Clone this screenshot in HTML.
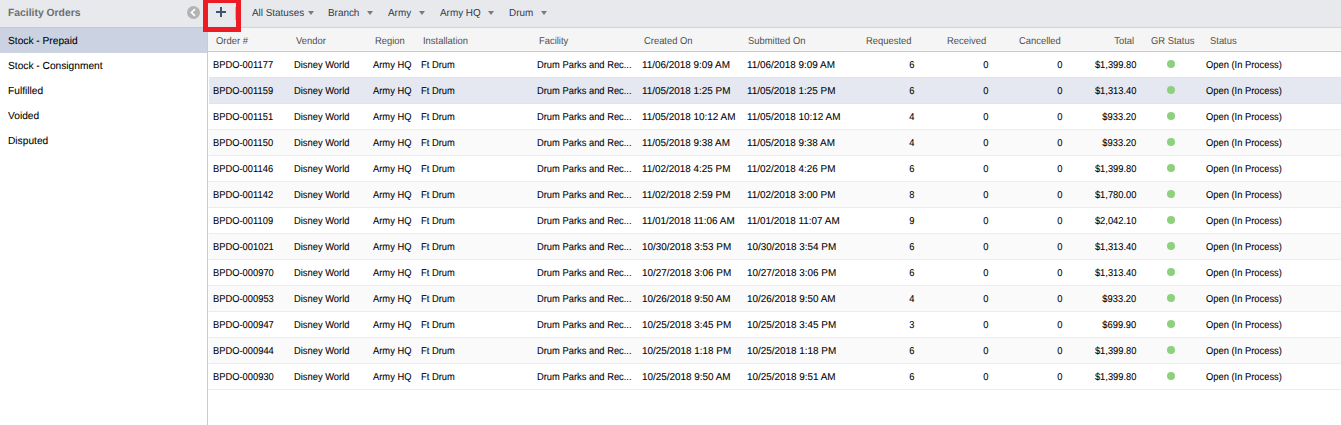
<!DOCTYPE html><html><head><meta charset="utf-8"><style>
*{margin:0;padding:0;box-sizing:border-box}
html,body{width:1341px;height:425px;overflow:hidden;background:#fff;position:relative}
body{font-family:"Liberation Sans",sans-serif;color:#000;text-rendering:geometricPrecision}
.a{position:absolute;white-space:nowrap}
#tb{left:0;top:0;width:1341px;height:27px;background:#e8e9ed;}
#tbl{left:0;top:26px;width:207px;height:1px;background:#eaebee}
#tbl2{left:0;top:27px;width:207px;height:1px;background:#c6c6c6}
#tbr{left:207px;top:26px;width:1134px;height:1px;background:#e7e7eb}
#tbr2{left:207px;top:27px;width:1134px;height:1px;background:#d1d5dd}
#side{left:0;top:28px;width:207px;height:397px;background:#fff}
#sideb{left:207px;top:28px;width:1px;height:397px;background:#c4ccd6}
.title{left:8px;top:7px;font-size:10.5px;font-weight:bold;color:#6e6e6e;letter-spacing:0px;transform-origin:0 0;transform:scaleX(0.985)}
.si{left:8px;font-size:10.2px;color:#000;letter-spacing:0px;transform-origin:0 0;transform:scaleX(1);-webkit-text-stroke:0.08px #000}
#sel{left:0;top:28px;width:207px;height:25px;background:#cbd3e3}
.tbt{font-size:10.2px;color:#2f3b50;top:7.5px;letter-spacing:0px;transform-origin:0 0;transform:scaleX(0.971)}
.arr{width:0;height:0;border-left:3.5px solid transparent;border-right:3.5px solid transparent;border-top:4px solid #7a7a7a;top:11px}
#hdr{left:208px;top:28px;width:1133px;height:23px;background:#f5f5f5}
#hdrb{left:208px;top:51px;width:1133px;height:1px;background:#c8c8c8}
.h{font-size:10px;color:#4f4f4f;top:36px;letter-spacing:0px;transform-origin:0 0;transform:scaleX(0.94)}
.row{left:208px;width:1133px;height:26px}
.sep{left:208px;width:1133px;height:1px;background:#ededed}
.d{font-size:10px;color:#000;letter-spacing:0px;transform-origin:0 0;transform:scale(0.935,1);-webkit-text-stroke:0.08px #000}
.r{text-align:right;transform-origin:100% 0 !important}
.dot{width:8px;height:8px;border-radius:50%;background:#8dd17f}
#red{left:203px;top:-2px;width:38px;height:34px;border:5px solid #ed1c24}
</style></head><body>
<div class="a" id="tb"></div><div class="a" id="tbl"></div><div class="a" id="tbl2"></div><div class="a" id="tbr"></div><div class="a" id="tbr2"></div>
<div class="a" id="side"></div><div class="a" id="sel"></div><div class="a" id="sideb"></div>
<div class="a title">Facility Orders</div>
<svg class="a" style="left:187px;top:6px" width="13" height="13" viewBox="0 0 13 13"><circle cx="6.5" cy="6.5" r="6.5" fill="#b3b3b3"/><path d="M8.0 3.2 L4.5 6.5 L8.0 9.8" stroke="#fff" stroke-width="1.7" fill="none"/></svg>
<svg class="a" style="left:216px;top:7px" width="10" height="10" viewBox="0 0 10 10"><rect x="0" y="4" width="10" height="2" fill="#3f5470"/><rect x="4" y="0" width="2" height="10" fill="#3f5470"/></svg>
<div class="a" style="left:235px;top:7px;width:1px;height:13px;background:#a9bbcf"></div>
<div class="a tbt" style="left:252px">All Statuses</div><div class="a arr" style="left:308px"></div>
<div class="a tbt" style="left:328px">Branch</div><div class="a arr" style="left:367px"></div>
<div class="a tbt" style="left:388px">Army</div><div class="a arr" style="left:419px"></div>
<div class="a tbt" style="left:440px">Army HQ</div><div class="a arr" style="left:488px"></div>
<div class="a tbt" style="left:509px">Drum</div><div class="a arr" style="left:541px"></div>
<div class="a si" style="top:36px">Stock - Prepaid</div>
<div class="a si" style="top:61px">Stock - Consignment</div>
<div class="a si" style="top:86px">Fulfilled</div>
<div class="a si" style="top:111px">Voided</div>
<div class="a si" style="top:136px">Disputed</div>
<div class="a" id="hdr"></div><div class="a" id="hdrb"></div><div class="a" style="left:208px;top:50px;width:1133px;height:1px;background:#f9f9f9"></div>
<div class="a h" style="left:216px">Order #</div>
<div class="a h" style="left:296px">Vendor</div>
<div class="a h" style="left:375px">Region</div>
<div class="a h" style="left:423px">Installation</div>
<div class="a h" style="left:539px">Facility</div>
<div class="a h" style="left:644px">Created On</div>
<div class="a h" style="left:748px">Submitted On</div>
<div class="a h" style="left:866px">Requested</div>
<div class="a h" style="left:947px">Received</div>
<div class="a h" style="left:1019px">Cancelled</div>
<div class="a h r" style="right:207px">Total</div>
<div class="a h" style="left:1151px">GR Status</div>
<div class="a h" style="left:1210px">Status</div>
<div class="a d" style="left:213px;top:60px">BPDO-001177</div>
<div class="a d" style="left:294px;top:60px">Disney World</div>
<div class="a d" style="left:373px;top:60px">Army HQ</div>
<div class="a d" style="left:421px;top:60px">Ft Drum</div>
<div class="a d" style="left:537px;top:60px">Drum Parks and Rec...</div>
<div class="a d" style="left:642px;top:60px;transform:scale(0.99,1)">11/06/2018 9:09 AM</div>
<div class="a d" style="left:747px;top:60px;transform:scale(0.99,1)">11/06/2018 9:09 AM</div>
<div class="a d" style="left:1206px;top:60px">Open (In Process)</div>
<div class="a d r" style="right:426px;top:60px">6</div>
<div class="a d r" style="right:352px;top:60px">0</div>
<div class="a d r" style="right:278px;top:60px">0</div>
<div class="a d r" style="right:205px;top:60px">$1,399.80</div>
<div class="a dot" style="left:1167px;top:60px"></div>
<div class="a row" style="left:209px;width:1132px;top:77px;height:27px;background:#e5e8f1;border-top:1px solid #e0e4ed;border-bottom:1px solid #e0e4ed"></div>
<div class="a d" style="left:213px;top:86px">BPDO-001159</div>
<div class="a d" style="left:294px;top:86px">Disney World</div>
<div class="a d" style="left:373px;top:86px">Army HQ</div>
<div class="a d" style="left:421px;top:86px">Ft Drum</div>
<div class="a d" style="left:537px;top:86px">Drum Parks and Rec...</div>
<div class="a d" style="left:642px;top:86px;transform:scale(0.99,1)">11/05/2018 1:25 PM</div>
<div class="a d" style="left:747px;top:86px;transform:scale(0.99,1)">11/05/2018 1:25 PM</div>
<div class="a d" style="left:1206px;top:86px">Open (In Process)</div>
<div class="a d r" style="right:426px;top:86px">6</div>
<div class="a d r" style="right:352px;top:86px">0</div>
<div class="a d r" style="right:278px;top:86px">0</div>
<div class="a d r" style="right:205px;top:86px">$1,313.40</div>
<div class="a dot" style="left:1167px;top:86px"></div>
<div class="a sep" style="top:129px"></div>
<div class="a d" style="left:213px;top:112px">BPDO-001151</div>
<div class="a d" style="left:294px;top:112px">Disney World</div>
<div class="a d" style="left:373px;top:112px">Army HQ</div>
<div class="a d" style="left:421px;top:112px">Ft Drum</div>
<div class="a d" style="left:537px;top:112px">Drum Parks and Rec...</div>
<div class="a d" style="left:642px;top:112px;transform:scale(0.99,1)">11/05/2018 10:12 AM</div>
<div class="a d" style="left:747px;top:112px;transform:scale(0.99,1)">11/05/2018 10:12 AM</div>
<div class="a d" style="left:1206px;top:112px">Open (In Process)</div>
<div class="a d r" style="right:426px;top:112px">4</div>
<div class="a d r" style="right:352px;top:112px">0</div>
<div class="a d r" style="right:278px;top:112px">0</div>
<div class="a d r" style="right:205px;top:112px">$933.20</div>
<div class="a dot" style="left:1167px;top:112px"></div>
<div class="a row" style="left:209px;width:1132px;top:130px;height:25px;background:#fafafa"></div>
<div class="a sep" style="top:155px"></div>
<div class="a d" style="left:213px;top:138px">BPDO-001150</div>
<div class="a d" style="left:294px;top:138px">Disney World</div>
<div class="a d" style="left:373px;top:138px">Army HQ</div>
<div class="a d" style="left:421px;top:138px">Ft Drum</div>
<div class="a d" style="left:537px;top:138px">Drum Parks and Rec...</div>
<div class="a d" style="left:642px;top:138px;transform:scale(0.99,1)">11/05/2018 9:38 AM</div>
<div class="a d" style="left:747px;top:138px;transform:scale(0.99,1)">11/05/2018 9:38 AM</div>
<div class="a d" style="left:1206px;top:138px">Open (In Process)</div>
<div class="a d r" style="right:426px;top:138px">4</div>
<div class="a d r" style="right:352px;top:138px">0</div>
<div class="a d r" style="right:278px;top:138px">0</div>
<div class="a d r" style="right:205px;top:138px">$933.20</div>
<div class="a dot" style="left:1167px;top:138px"></div>
<div class="a sep" style="top:181px"></div>
<div class="a d" style="left:213px;top:164px">BPDO-001146</div>
<div class="a d" style="left:294px;top:164px">Disney World</div>
<div class="a d" style="left:373px;top:164px">Army HQ</div>
<div class="a d" style="left:421px;top:164px">Ft Drum</div>
<div class="a d" style="left:537px;top:164px">Drum Parks and Rec...</div>
<div class="a d" style="left:642px;top:164px;transform:scale(0.99,1)">11/02/2018 4:25 PM</div>
<div class="a d" style="left:747px;top:164px;transform:scale(0.99,1)">11/02/2018 4:26 PM</div>
<div class="a d" style="left:1206px;top:164px">Open (In Process)</div>
<div class="a d r" style="right:426px;top:164px">6</div>
<div class="a d r" style="right:352px;top:164px">0</div>
<div class="a d r" style="right:278px;top:164px">0</div>
<div class="a d r" style="right:205px;top:164px">$1,399.80</div>
<div class="a dot" style="left:1167px;top:164px"></div>
<div class="a row" style="left:209px;width:1132px;top:182px;height:25px;background:#fafafa"></div>
<div class="a sep" style="top:207px"></div>
<div class="a d" style="left:213px;top:190px">BPDO-001142</div>
<div class="a d" style="left:294px;top:190px">Disney World</div>
<div class="a d" style="left:373px;top:190px">Army HQ</div>
<div class="a d" style="left:421px;top:190px">Ft Drum</div>
<div class="a d" style="left:537px;top:190px">Drum Parks and Rec...</div>
<div class="a d" style="left:642px;top:190px;transform:scale(0.99,1)">11/02/2018 2:59 PM</div>
<div class="a d" style="left:747px;top:190px;transform:scale(0.99,1)">11/02/2018 3:00 PM</div>
<div class="a d" style="left:1206px;top:190px">Open (In Process)</div>
<div class="a d r" style="right:426px;top:190px">8</div>
<div class="a d r" style="right:352px;top:190px">0</div>
<div class="a d r" style="right:278px;top:190px">0</div>
<div class="a d r" style="right:205px;top:190px">$1,780.00</div>
<div class="a dot" style="left:1167px;top:190px"></div>
<div class="a sep" style="top:233px"></div>
<div class="a d" style="left:213px;top:216px">BPDO-001109</div>
<div class="a d" style="left:294px;top:216px">Disney World</div>
<div class="a d" style="left:373px;top:216px">Army HQ</div>
<div class="a d" style="left:421px;top:216px">Ft Drum</div>
<div class="a d" style="left:537px;top:216px">Drum Parks and Rec...</div>
<div class="a d" style="left:642px;top:216px;transform:scale(0.99,1)">11/01/2018 11:06 AM</div>
<div class="a d" style="left:747px;top:216px;transform:scale(0.99,1)">11/01/2018 11:07 AM</div>
<div class="a d" style="left:1206px;top:216px">Open (In Process)</div>
<div class="a d r" style="right:426px;top:216px">9</div>
<div class="a d r" style="right:352px;top:216px">0</div>
<div class="a d r" style="right:278px;top:216px">0</div>
<div class="a d r" style="right:205px;top:216px">$2,042.10</div>
<div class="a dot" style="left:1167px;top:216px"></div>
<div class="a row" style="left:209px;width:1132px;top:234px;height:25px;background:#fafafa"></div>
<div class="a sep" style="top:259px"></div>
<div class="a d" style="left:213px;top:242px">BPDO-001021</div>
<div class="a d" style="left:294px;top:242px">Disney World</div>
<div class="a d" style="left:373px;top:242px">Army HQ</div>
<div class="a d" style="left:421px;top:242px">Ft Drum</div>
<div class="a d" style="left:537px;top:242px">Drum Parks and Rec...</div>
<div class="a d" style="left:642px;top:242px;transform:scale(0.99,1)">10/30/2018 3:53 PM</div>
<div class="a d" style="left:747px;top:242px;transform:scale(0.99,1)">10/30/2018 3:54 PM</div>
<div class="a d" style="left:1206px;top:242px">Open (In Process)</div>
<div class="a d r" style="right:426px;top:242px">6</div>
<div class="a d r" style="right:352px;top:242px">0</div>
<div class="a d r" style="right:278px;top:242px">0</div>
<div class="a d r" style="right:205px;top:242px">$1,313.40</div>
<div class="a dot" style="left:1167px;top:242px"></div>
<div class="a sep" style="top:285px"></div>
<div class="a d" style="left:213px;top:268px">BPDO-000970</div>
<div class="a d" style="left:294px;top:268px">Disney World</div>
<div class="a d" style="left:373px;top:268px">Army HQ</div>
<div class="a d" style="left:421px;top:268px">Ft Drum</div>
<div class="a d" style="left:537px;top:268px">Drum Parks and Rec...</div>
<div class="a d" style="left:642px;top:268px;transform:scale(0.99,1)">10/27/2018 3:06 PM</div>
<div class="a d" style="left:747px;top:268px;transform:scale(0.99,1)">10/27/2018 3:06 PM</div>
<div class="a d" style="left:1206px;top:268px">Open (In Process)</div>
<div class="a d r" style="right:426px;top:268px">6</div>
<div class="a d r" style="right:352px;top:268px">0</div>
<div class="a d r" style="right:278px;top:268px">0</div>
<div class="a d r" style="right:205px;top:268px">$1,313.40</div>
<div class="a dot" style="left:1167px;top:268px"></div>
<div class="a row" style="left:209px;width:1132px;top:286px;height:25px;background:#fafafa"></div>
<div class="a sep" style="top:311px"></div>
<div class="a d" style="left:213px;top:294px">BPDO-000953</div>
<div class="a d" style="left:294px;top:294px">Disney World</div>
<div class="a d" style="left:373px;top:294px">Army HQ</div>
<div class="a d" style="left:421px;top:294px">Ft Drum</div>
<div class="a d" style="left:537px;top:294px">Drum Parks and Rec...</div>
<div class="a d" style="left:642px;top:294px;transform:scale(0.99,1)">10/26/2018 9:50 AM</div>
<div class="a d" style="left:747px;top:294px;transform:scale(0.99,1)">10/26/2018 9:50 AM</div>
<div class="a d" style="left:1206px;top:294px">Open (In Process)</div>
<div class="a d r" style="right:426px;top:294px">4</div>
<div class="a d r" style="right:352px;top:294px">0</div>
<div class="a d r" style="right:278px;top:294px">0</div>
<div class="a d r" style="right:205px;top:294px">$933.20</div>
<div class="a dot" style="left:1167px;top:294px"></div>
<div class="a sep" style="top:337px"></div>
<div class="a d" style="left:213px;top:320px">BPDO-000947</div>
<div class="a d" style="left:294px;top:320px">Disney World</div>
<div class="a d" style="left:373px;top:320px">Army HQ</div>
<div class="a d" style="left:421px;top:320px">Ft Drum</div>
<div class="a d" style="left:537px;top:320px">Drum Parks and Rec...</div>
<div class="a d" style="left:642px;top:320px;transform:scale(0.99,1)">10/25/2018 3:45 PM</div>
<div class="a d" style="left:747px;top:320px;transform:scale(0.99,1)">10/25/2018 3:45 PM</div>
<div class="a d" style="left:1206px;top:320px">Open (In Process)</div>
<div class="a d r" style="right:426px;top:320px">3</div>
<div class="a d r" style="right:352px;top:320px">0</div>
<div class="a d r" style="right:278px;top:320px">0</div>
<div class="a d r" style="right:205px;top:320px">$699.90</div>
<div class="a dot" style="left:1167px;top:320px"></div>
<div class="a row" style="left:209px;width:1132px;top:338px;height:25px;background:#fafafa"></div>
<div class="a sep" style="top:363px"></div>
<div class="a d" style="left:213px;top:346px">BPDO-000944</div>
<div class="a d" style="left:294px;top:346px">Disney World</div>
<div class="a d" style="left:373px;top:346px">Army HQ</div>
<div class="a d" style="left:421px;top:346px">Ft Drum</div>
<div class="a d" style="left:537px;top:346px">Drum Parks and Rec...</div>
<div class="a d" style="left:642px;top:346px;transform:scale(0.99,1)">10/25/2018 1:18 PM</div>
<div class="a d" style="left:747px;top:346px;transform:scale(0.99,1)">10/25/2018 1:18 PM</div>
<div class="a d" style="left:1206px;top:346px">Open (In Process)</div>
<div class="a d r" style="right:426px;top:346px">6</div>
<div class="a d r" style="right:352px;top:346px">0</div>
<div class="a d r" style="right:278px;top:346px">0</div>
<div class="a d r" style="right:205px;top:346px">$1,399.80</div>
<div class="a dot" style="left:1167px;top:346px"></div>
<div class="a sep" style="top:389px"></div>
<div class="a d" style="left:213px;top:372px">BPDO-000930</div>
<div class="a d" style="left:294px;top:372px">Disney World</div>
<div class="a d" style="left:373px;top:372px">Army HQ</div>
<div class="a d" style="left:421px;top:372px">Ft Drum</div>
<div class="a d" style="left:537px;top:372px">Drum Parks and Rec...</div>
<div class="a d" style="left:642px;top:372px;transform:scale(0.99,1)">10/25/2018 9:50 AM</div>
<div class="a d" style="left:747px;top:372px;transform:scale(0.99,1)">10/25/2018 9:51 AM</div>
<div class="a d" style="left:1206px;top:372px">Open (In Process)</div>
<div class="a d r" style="right:426px;top:372px">6</div>
<div class="a d r" style="right:352px;top:372px">0</div>
<div class="a d r" style="right:278px;top:372px">0</div>
<div class="a d r" style="right:205px;top:372px">$1,399.80</div>
<div class="a dot" style="left:1167px;top:372px"></div>
<div class="a" id="red"></div>
</body></html>
